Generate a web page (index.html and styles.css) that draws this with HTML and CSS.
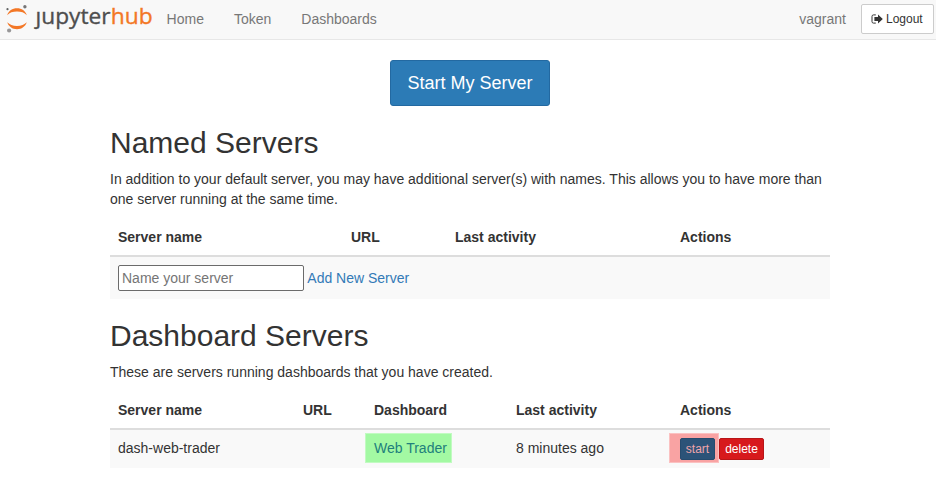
FILE: index.html
```html
<!DOCTYPE html>
<html lang="en">
<head>
<meta charset="utf-8">
<title>JupyterHub</title>
<link rel="stylesheet" href="styles.css">
</head>
<body>
<nav class="navbar">
  <a class="brand" href="#">
    <svg width="153" height="39" viewBox="0 0 153 39" role="img" aria-label="jupyterhub">
      <path d="M7.2 15.2C8.7 10.8 12.300 8.300 17 8.300S25.300 10.800 26.800 15.200C24.400 12.700 21.200 11.600 17 11.600S9.600 12.700 7.200 15.200Z" fill="#f37726"/>
      <path d="M7.200 22.300C8.700 26.700 12.300 29.200 17 29.200S25.300 26.700 26.800 22.300C24.400 24.800 21.200 25.900 17 25.900S9.600 24.800 7.200 22.300Z" fill="#f37726"/>
      <circle cx="24.900" cy="6.800" r="1.700" fill="#767677"/>
      <circle cx="7.500" cy="9.200" r="1.100" fill="#616262"/>
      <circle cx="9.100" cy="30.500" r="2.100" fill="#989798"/>
      <text class="word gray" x="35.500" y="24.400" textLength="75" lengthAdjust="spacingAndGlyphs">ȷupyter</text>
      <text class="word orange" x="110.800" y="24.400" textLength="42" lengthAdjust="spacingAndGlyphs">hub</text>
    </svg>
  </a>
  <a class="nav-link" href="#">Home</a>
  <a class="nav-link" href="#">Token</a>
  <a class="nav-link" href="#">Dashboards</a>
  <span class="user">vagrant</span>
  <a class="logout" href="#">
    <svg class="logout-icon" width="12" height="12" viewBox="0 0 12 12">
      <path d="M4.800 1.900H2.500Q1 1.900 1 3.400V8.600Q1 10.100 2.500 10.100H4.800" fill="none" stroke="#333" stroke-width="1"/>
      <path d="M7 1.600L11.800 6L7 10.400V8H3.400V4H7Z" fill="#333"/>
    </svg>
    Logout</a>
</nav>
<main class="container">
  <div class="launch"><a class="btn-primary" href="#">Start My Server</a></div>
  <h2>Named Servers</h2>
  <p>In addition to your default server, you may have additional server(s) with names. This allows you to have more than one server running at the same time.</p>
  <table class="named">
    <colgroup><col class="n1"><col class="n2"><col class="n3"><col></colgroup>
    <thead><tr><th>Server name</th><th>URL</th><th>Last activity</th><th>Actions</th></tr></thead>
    <tbody><tr><td colspan="4"><div class="new-server"><input class="name-input" type="text" placeholder="Name your server"><a href="#">Add New Server</a></div></td></tr></tbody>
  </table>
  <h2>Dashboard Servers</h2>
  <p>These are servers running dashboards that you have created.</p>
  <table class="dash">
    <colgroup><col class="d1"><col class="d2"><col class="d3"><col class="d4"><col></colgroup>
    <thead><tr><th>Server name</th><th>URL</th><th>Dashboard</th><th>Last activity</th><th>Actions</th></tr></thead>
    <tbody><tr>
      <td>dash-web-trader</td>
      <td></td>
      <td><span class="mark mark-green"><a href="#">Web Trader</a></span></td>
      <td>8 minutes ago</td>
      <td><div class="actions"><span class="mark mark-red"><a class="btn-xs start" href="#">start</a></span><a class="btn-xs delete" href="#">delete</a></div></td>
    </tr></tbody>
  </table>
</main>
</body>
</html>
```
FILE: styles.css
```css
*, *::before, *::after { box-sizing: border-box; }
body {
  margin: 0;
  font: 14px/20px "Liberation Sans", Arial, sans-serif;
  color: #333;
  background: #fff;
}
a { color: #337ab7; text-decoration: none; }
.navbar {
  display: flex;
  align-items: center;
  height: 40px;
  padding-right: 2px;
  background: #f8f8f8;
  border-bottom: 1px solid #e7e7e7;
}
.brand { width: 151.600px; height: 39px; }
.brand svg { display: block; }
.word { font-family: "Open Sans", "Noto Sans", sans-serif; font-size: 22.5px; stroke-width: .35px; }
.gray { fill: #4e4e4e; stroke: #4e4e4e; }
.orange { fill: #f37726; stroke: #f37726; }
.nav-link { padding: 0 15px; margin-top: -2px; color: #777; }
.user { margin-left: auto; margin-right: 15px; margin-top: -2px; color: #777; }
.logout {
  display: flex;
  align-items: center;
  gap: 3px;
  width: 73px;
  height: 30px;
  margin-bottom: 1px;
  padding-left: 9px;
  border: 1px solid #ccc;
  border-radius: 2px;
  background: #fff;
  color: #333;
  font-size: 12px;
}
.container { width: 720px; margin: 0 auto; position: relative; left: 2px; }
.launch { display: flex; justify-content: center; padding-top: 20px; }
.btn-primary {
  height: 46px;
  width: 160px;
  border: 1px solid #2369a1;
  border-radius: 3px;
  background: #2c7bb6;
  color: #fff;
  font-size: 18px;
  line-height: 44px;
  text-align: center;
}
h2 { margin: 20px 0 10px; font-size: 30px; font-weight: 400; line-height: 33px; }
p { margin: 0 0 10px; }
table { width: 100%; table-layout: fixed; border-spacing: 0; }
th, td { padding: 8px; text-align: left; }
th { border-bottom: 2px solid #ddd; }
td { background: #f9f9f9; }
.named td { height: 42px; }
.dash td { height: 38px; vertical-align: top; }
.n1 { width: 233px; }
.n2 { width: 104px; }
.n3 { width: 225px; }
.d1 { width: 185px; }
.d2 { width: 71px; }
.d3 { width: 142px; }
.d4 { width: 164px; }
.new-server { display: flex; align-items: center; gap: 3.300px; }
.name-input {
  width: 186px;
  height: 26px;
  padding: 1px 3px;
  border: 1px solid #6b6b6b;
  border-radius: 2px;
  background: #fff;
  font: 14px/20px "Liberation Sans", Arial, sans-serif;
}
.name-input::placeholder { color: #757575; }
.mark { position: relative; display: block; width: max-content; }
.mark::before { content: ""; position: absolute; pointer-events: none; }
.mark-green a { position: relative; color: #217f7c; }
.mark-green::before {
  left: -9px;
  top: -5px;
  width: 87px;
  height: 30px;
  background: #a3f9a3;
  border: 1px solid #c1fbc1;
}
.mark-red::before {
  left: -11px;
  top: -5px;
  width: 50px;
  height: 30px;
  background: #f9a3a3;
  border: 1px solid #fbc1c1;
}
.actions { display: flex; gap: 4px; height: 22px; }
.btn-xs {
  position: relative;
  display: block;
  height: 22px;
  border: 1px solid;
  border-radius: 2px;
  font-size: 12px;
  line-height: 20px;
  text-align: center;
  color: #fff;
}
.start { width: 35px; background: #2c5378; border-color: #264b6e; color: #f0a5ab; }
.delete { width: 45px; background: #d7191c; border-color: #b81518; }
```
